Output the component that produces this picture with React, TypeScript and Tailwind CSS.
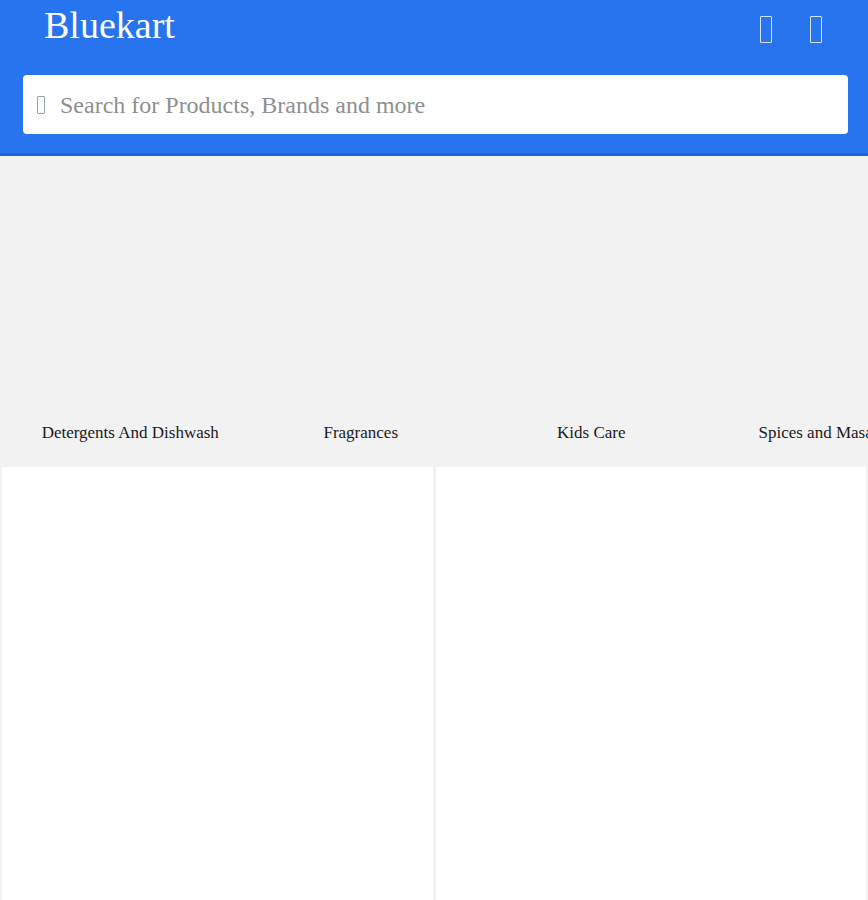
import React from "react";

const categories = [
  "Detergents And Dishwash",
  "Fragrances",
  "Kids Care",
  "Spices and Masala",
];

// missing icon-font glyph, drawn as an outlined box
function Tofu({ className }: { className: string }) {
  return <span className={`inline-block rounded-[1px] border-[1.5px] ${className}`} />;
}

export default function App() {
  return (
    <div className="min-h-[900px] bg-[#f2f2f2] font-['Liberation_Serif',serif]">
      <header className="bg-[#2874ef] border-b-[3px] border-[#1d66dc]">
        <div className="flex h-[52px] items-center justify-between pl-[44px] pr-[46px]">
          <h1 className="text-[38px] leading-none text-white pb-[2px]">Bluekart</h1>
          <div className="flex items-center gap-[38px] pt-[6px]">
            <Tofu className="h-[27px] w-[12px] border-white/80" />
            <Tofu className="h-[27px] w-[12px] border-white/80" />
          </div>
        </div>
        <div className="pl-[23px] pr-[20px] pt-[23px] pb-[19px]">
          <div className="flex h-[59px] items-center gap-[15px] rounded-[4px] bg-white pl-[14px]">
            <Tofu className="h-[18px] w-[8px] border-gray-400" />
            <span className="text-[24px] text-[#8f8f8f]">Search for Products, Brands and more</span>
          </div>
        </div>
      </header>

      <div className="flex h-[311px] overflow-hidden pl-[15px]">
        {categories.map((c) => (
          <div key={c} className="flex w-[230.5px] shrink-0 flex-col items-center">
            <div className="h-[264px] w-full" />
            <p className="whitespace-nowrap text-[17px] text-[#1a1a1a]">{c}</p>
          </div>
        ))}
      </div>

      <div className="grid grid-cols-2 gap-[3px] px-[2px]">
        <div className="h-[433px] bg-white" />
        <div className="h-[433px] bg-white" />
      </div>
    </div>
  );
}
